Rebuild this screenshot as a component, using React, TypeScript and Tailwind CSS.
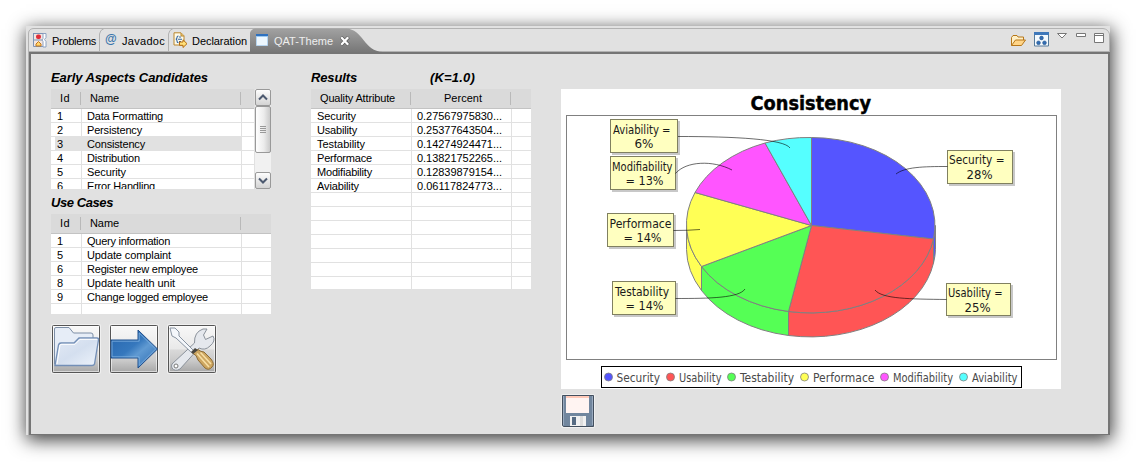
import React, { useLayoutEffect, useRef } from "react";

function Fit({ w, children, className = "" }: { w: number; children: string; className?: string }) {
  const ref = useRef<HTMLSpanElement>(null);
  useLayoutEffect(() => {
    const el = ref.current;
    if (!el) return;
    el.style.letterSpacing = "0px";
    const natural = el.getBoundingClientRect().width;
    el.style.letterSpacing = `${(w - natural) / children.length}px`;
  }, [w, children]);
  return (
    <span ref={ref} className={`inline-block whitespace-pre ${className}`}>
      {children}
    </span>
  );
}

type Cell = [string, number];

interface TableProps {
  cols: string[];
  head: { label: Cell; pad: string }[];
  rows: Cell[][];
  blank: number;
  height: string;
  selected?: number;
  scroll?: boolean;
}

function Table({ cols, head, rows, blank, height, selected, scroll }: TableProps) {
  const all: (Cell[] | null)[] = [...rows, ...Array(blank).fill(null)];
  return (
    <div className={`relative w-[220px] shrink-0 overflow-hidden bg-white ${height}`}>
      <div className="flex h-5 border-b border-[#c3c3c3] bg-[#dadada] text-[11px] leading-[19px]">
        {head.map((h, i) => (
          <div key={i} className={`flex shrink-0 justify-between ${cols[i]} ${h.pad}`}>
            <Fit w={h.label[1]}>{h.label[0]}</Fit>
            <i className="mt-[3px] h-[13px] w-px bg-[#b9b9b9]" />
          </div>
        ))}
      </div>
      {all.map((r, i) => (
        <div key={i} className="flex h-[14px] border-b border-[#e1e1e1] text-[11px] leading-[14px]">
          {cols.map((c, j) => (
            <div key={j} className={`flex shrink-0 ${c} ${j === 0 ? "pl-1" : "border-l border-[#e1e1e1]"}`}>
              <div className={`h-[14px] grow ${j === 0 ? "pl-[2px]" : "pl-[5px]"} ${i === selected ? "bg-[#e1e1e1]" : ""}`}>
                {r && <Fit w={r[j][1]}>{r[j][0]}</Fit>}
              </div>
            </div>
          ))}
          <div className="grow border-l border-[#e1e1e1]" />
        </div>
      ))}
      {scroll && <ScrollBar />}
    </div>
  );
}

function ScrollBar() {
  return (
    <svg className="absolute right-0 top-0" width="17" height="100" viewBox="0 0 17 100">
      <defs>
        <linearGradient id="sb" x1="0" x2="1" y1="0" y2="0">
          <stop offset="0" stopColor="#fff" />
          <stop offset=".55" stopColor="#ececec" />
          <stop offset="1" stopColor="#c8c8c8" />
        </linearGradient>
        <linearGradient id="sv" x1="0" x2="0" y1="0" y2="1">
          <stop offset="0" stopColor="#fff" />
          <stop offset="1" stopColor="#d2d2d2" />
        </linearGradient>
      </defs>
      <rect width="17" height="100" fill="#f1f1f1" />
      <rect width="1" height="100" fill="#e1e1e1" />
      <rect x="1.5" y=".5" width="15" height="16" rx="1.5" fill="url(#sv)" stroke="#999" />
      <rect x="1.5" y="17.5" width="15" height="46" rx="1.5" fill="url(#sb)" stroke="#999" />
      <rect x="1.5" y="83.5" width="15" height="16" rx="1.5" fill="url(#sv)" stroke="#999" />
      <path d="M5 10.5l4-4 4 4M5 89.5l4 4 4-4" fill="none" stroke="#4d5a70" strokeWidth="2" />
      <path d="M6 37.5h6M6 39.5h6M6 41.5h6M6 43.5h6" stroke="#999" />
    </svg>
  );
}

function ProblemsIcon() {
  return (
    <svg width="14" height="16" viewBox="0 0 14 16">
      <path d="M.5 1v13.5h12M1 1.5h12" stroke="#7d93b5" fill="none" />
      <path d="M1 2h9v12H1z" fill="#f4e6df" />
      <path d="M10 1.500h3v4l-1.500 2 1.500 2V15h-3V9.500L9 8l1-1.500z" fill="#fff" stroke="#8ea3c2" />
      <path d="M1 8h8" stroke="#7d93b5" />
      <rect x="3" y="2.500" width="5" height="4.500" rx="2" fill="#e02d39" />
      <path d="M5.500 9.500L8 12v2H3v-2z" fill="#ffd66d" stroke="#c4761a" />
    </svg>
  );
}

function DeclarationIcon() {
  return (
    <svg width="15" height="16" viewBox="0 0 15 16">
      <path d="M1 .8h7l3 3V13H1z" fill="#fffbe9" stroke="#b9862e" />
      <path d="M8 1v3h3" fill="#eccb7d" stroke="#b9862e" />
      <path d="M5.500 4Q4 4 4 5.500T2.800 7.300Q4 7.300 4 9t1.500 1.700M5 7.300h4M6 5h2M6 9.500h2" fill="none" stroke="#3265a3" strokeWidth="1.100" />
      <path d="M6.500 10h3.500V7.800L14 11.700 10 15.500V13.300H6.500z" fill="#ffe07a" stroke="#b56c10" />
    </svg>
  );
}

function Tabs() {
  return (
    <div className="relative flex h-[28px] shrink-0 border-l border-[#e1e1e1] bg-[#e1e1e1]">
      <svg className="absolute -left-px top-0" width="1084" height="28" viewBox="26 26 1084 28">
        <defs>
          <linearGradient id="act" x1="0" x2="0" y1="0" y2="1">
            <stop offset="0" stopColor="#a2a2a2" />
            <stop offset="1" stopColor="#777" />
          </linearGradient>
        </defs>
        <path d="M28.500 54V33Q29 28.500 34 28.500H1103Q1108 29 1109.500 34V54M28 51.500H1109" fill="none" stroke="#b2b2b2" />
        <path d="M99.500 51V34Q100 30 104 28.500M168.500 51V34Q169 30 173 28.500" fill="none" stroke="#b2b2b2" />
        <path d="M250 52V33Q251 29 255 28.500H346C363 29 364 51.500 383 52z" fill="url(#act)" />
        <path d="M29 52H1110V54H29z" fill="#757575" />
      </svg>
      <div className="relative flex grow items-center pl-[6px] text-[11px] leading-[24px]">
        <div className="flex w-[72px] items-center"><ProblemsIcon /><Fit w={44} className="ml-[5px] pt-[2px]">Problems</Fit></div>
        <div className="flex w-[68px] items-center">
          <b className="w-[17px] pb-[2px] text-[12px] leading-[20px] text-[#3a76ac]">@</b>
          <Fit w={43} className="pt-[2px]">Javadoc</Fit>
        </div>
        <div className="flex w-[82px] items-center"><DeclarationIcon /><Fit w={55} className="ml-[4px] pt-[2px]">Declaration</Fit></div>
        <div className="flex grow items-center text-[#eee]">
          <svg width="14" height="14" viewBox="0 0 14 14"><path d="M1.500 1.500h11v11h-11z" fill="#edf7fe" stroke="#b6d4ee" /><path d="M1 1h12v3H1z" fill="#2e71bf" /><path d="M1 3.500h12" stroke="#9dc8ee" /></svg>
          <Fit w={59} className="ml-[5px] pt-[2px]">QAT-Theme</Fit>
          <svg className="ml-[7px] mt-px" width="10" height="10" viewBox="0 0 10 10"><path d="M1 1l7.500 8M8.500 1L1 9" stroke="#555" strokeWidth="3.400" /><path d="M1.200 1.200l7 7.500M8.200 1.200l-7 7.500" stroke="#fff" strokeWidth="2.300" /></svg>
        </div>
        <svg width="100" height="28" viewBox="1010 26 100 28">
          <path d="M1011.500 45.500V37.500l1.500-2h4l1 1.500h5.500v3" fill="#fff0c7" stroke="#b77719" />
          <path d="M1011.500 45.500l4-5.500h10l-4 5.500z" fill="#ffd588" stroke="#b77719" />
          <path d="M1034.500 32.500h14v13.500h-14z" fill="#f3faff" stroke="#567b9b" />
          <path d="M1034 32h15v3h-15z" fill="#3e78ba" />
          <g fill="#316eb6" stroke="#244c7d" strokeWidth=".5"><circle cx="1041.500" cy="38" r="1.900" /><circle cx="1038.500" cy="42.800" r="1.900" /><circle cx="1044.500" cy="42.800" r="1.900" /></g>
          <path d="M1057.500 33.500h9l-4.500 4.500z" fill="#fff" stroke="#777" />
          <path d="M1076.500 33.500h9v3h-9z" fill="#fff" stroke="#777" />
          <path d="M1094.500 33.500h9v9h-9zM1094 35.500h10" fill="#fff" stroke="#777" />
        </svg>
      </div>
    </div>
  );
}

function Frame() {
  return (
    <>
      <rect x=".5" y=".5" width="49" height="49" rx="1" fill="none" stroke="#f0f0f0" />
      <rect x="1.500" y="1.500" width="47" height="47" rx="1" fill="url(#btn)" stroke="#555" />
      <rect x="2.500" y="2.500" width="45" height="45" fill="none" stroke="#fff" strokeOpacity=".55" />
    </>
  );
}

function Buttons() {
  return (
    <div className="mt-[10px] flex gap-2">
      <svg width="50" height="50" viewBox="0 0 50 50">
        <defs>
          <linearGradient id="btn" x1="0" x2="0" y1="0" y2="1"><stop offset="0" stopColor="#f8f8f8" /><stop offset=".5" stopColor="#e9e9e9" /><stop offset=".52" stopColor="#d9d9d9" /><stop offset=".75" stopColor="#c9c9c9" /><stop offset="1" stopColor="#a6a6a6" /></linearGradient>
          <linearGradient id="fold" x1="0" x2="1" y1="0" y2="1"><stop offset="0" stopColor="#e3eaf5" /><stop offset=".5" stopColor="#d4dfef" /><stop offset="1" stopColor="#edf3fb" /></linearGradient>
        </defs>
        <Frame />
        <path d="M3.500 40V5Q3.500 3.500 5 3.500H18L22.500 9H40Q42 9 42 11V40z" fill="#e6edf7" stroke="#7c8ea6" />
        <path d="M4 41.500L7.500 21Q8 19 10 19H23L28 14H46Q48 14 47.500 16L43.500 40Q43 41.500 41 41.500z" fill="url(#fold)" stroke="#738fb7" strokeWidth="1.300" />
        <path d="M6 40L9 21Q9.500 20.300 11 20.300H24L29 15.300H46" fill="none" stroke="#fff" />
      </svg>
      <svg width="50" height="50" viewBox="0 0 50 50">
        <defs><linearGradient id="arr" x1="0" x2="1" y1="0" y2="1"><stop offset="0" stopColor="#2564ad" /><stop offset=".45" stopColor="#3678bd" /><stop offset=".6" stopColor="#609ad2" /><stop offset="1" stopColor="#2868b0" /></linearGradient></defs>
        <Frame />
        <path d="M2 16H29V6L48.500 25 29 44V34H2z" fill="url(#arr)" stroke="#1f4e8c" />
        <path d="M3 17.200H30.200V9L46.700 25 30.200 41.500V32.800H3z" fill="none" stroke="#80b1df" strokeWidth=".8" />
      </svg>
      <svg width="50" height="50" viewBox="0 0 50 50">
        <Frame />
        <path d="M5 40L27.500 19Q27 8 36 5L40 5 36.500 11 38.500 15.500 46 12Q49 17 43 22 38 27 32 24L13 45Q8 48 5 44 4 42 5 40z" fill="#e5e8ed" stroke="#8b929b" />
        <circle cx="9" cy="42" r="2" fill="#fff" stroke="#777" />
        <path d="M3 4L8 4 12 8 12 12 27 27 25 29 9 14 5 12z" fill="#f4f7fb" stroke="#8994a2" />
        <path d="M25.500 29L31 25.500Q34 28 37 28L44 35Q48 40 45 43 42 47 38 44L31 36Q30 31 25.500 29z" fill="#cda661" stroke="#8d6c35" />
        <path d="M30 29.500L42 43M33.500 28.500L44 40" stroke="#f7dfa5" strokeWidth="1.600" />
        <path d="M24 28l4-4 3 2-5 4z" fill="#494640" />
      </svg>
    </div>
  );
}

interface Box {
  x: number; y: number; w: number; h: number;
  lines: [string, number, number, number][];
}

const labels: Box[] = [
  { x: 610.5, y: 119.5, w: 67, h: 33, lines: [["Aviability =", 613, 57.5, 134], ["6%", 634.5, 19, 148]] },
  { x: 610.5, y: 156.5, w: 65, h: 33, lines: [["Modifiability", 612, 60.5, 171], ["= 13%", 625.5, 38, 185]] },
  { x: 607.5, y: 213.5, w: 66, h: 33, lines: [["Performace", 609.5, 62, 228], ["= 14%", 623.5, 38, 242]] },
  { x: 612.5, y: 281.5, w: 63, h: 33, lines: [["Testability", 615, 54, 296], ["= 14%", 625.5, 38, 310]] },
  { x: 947.5, y: 150.5, w: 65, h: 33, lines: [["Security =", 949, 55.5, 164], ["28%", 966.5, 26, 179]] },
  { x: 946.5, y: 283.5, w: 64, h: 32, lines: [["Usability =", 948, 54.5, 297], ["25%", 964.5, 26, 312]] },
];

const legend: [string, string, number, number, number][] = [
  ["Security", "#5555ff", 608.5, 616.5, 43.5],
  ["Usability", "#ff5555", 670.5, 679, 42.5],
  ["Testability", "#55ff55", 731.5, 740, 54],
  ["Performace", "#ffff55", 804.5, 813, 61.5],
  ["Modifiability", "#ff55ff", 884.5, 893, 60],
  ["Aviability", "#55ffff", 963.5, 972, 45.5],
];

const chartFont = "[font-family:'DejaVu_Sans_Condensed','DejaVu_Sans',sans-serif]";

function Chart() {
  return (
    <svg className={`bg-white ${chartFont}`} width="500" height="300" viewBox="561 89 500 300">
      <text x="750.500" y="110" className="font-bold" fontSize="19.5" stroke="#000" strokeWidth=".4" textLength="120.500" lengthAdjust="spacingAndGlyphs">Consistency</text>
      <rect x="566.500" y="115.500" width="490" height="244" fill="none" stroke="#808080" />
      <g stroke="#808080" strokeWidth="1" strokeLinejoin="round">
        <path d="M933.500 239A124.500 88 0 0 0 935.500 225.500V249.500A124.500 88 0 0 1 933.500 263z" fill="#5555ff" />
        <path d="M933.500 239A124.500 88 0 0 1 788.500 311.500V335.500A124.500 88 0 0 0 933.500 263z" fill="#ff5555" />
        <path d="M788.500 311.500A124.500 88 0 0 1 701.500 266.500V290.500A124.500 88 0 0 0 788.500 335.500z" fill="#55ff55" />
        <path d="M701.500 266.500A124.500 88 0 0 1 686.500 225.500V249.500A124.500 88 0 0 0 701.500 290.500z" fill="#ffff55" />
        <path d="M811.500 225.500V137.500A124.500 88 0 0 1 933.500 239z" fill="#5555ff" />
        <path d="M811.500 225.500L933.500 239A124.500 88 0 0 1 788.500 311.500z" fill="#ff5555" />
        <path d="M811.500 225.500L788.500 311.500A124.500 88 0 0 1 701.500 266.500z" fill="#55ff55" />
        <path d="M811.500 225.500L701.500 266.500A124.500 88 0 0 1 695 192.500z" fill="#ffff55" />
        <path d="M811.500 225.500L695 192.500A124.500 88 0 0 1 765 143z" fill="#ff55ff" />
        <path d="M811.500 225.500L765 143A124.500 88 0 0 1 811.500 137.500z" fill="#55ffff" />
      </g>
      {labels.map((b) => (
        <g key={b.lines[0][0]}>
          <rect x={b.x + 1.5} y={b.y + 1.5} width={b.w + 1} height={b.h + 1} fill="#c8c8c8" />
          <rect x={b.x} y={b.y} width={b.w} height={b.h} fill="#ffffc0" stroke="#808060" />
          {b.lines.map(([t, x, w, y]) => (
            <text key={t} x={x} y={y} textLength={w} lengthAdjust="spacingAndGlyphs" fontSize="12" fill="#1a1a1a">{t}</text>
          ))}
        </g>
      ))}
      <path d="M678 136.500C735 136.500 784 139 790 148M675.500 173.500C686 161 713 160 732 170M673.500 230.500Q688 230.500 700 229.500M675.500 298.500C710 298.500 739 298 745 289M947.500 166.500C923 166.500 905 167 896 174M946.500 299.500C910 299 882 299 875 290" fill="none" stroke="#000" strokeOpacity=".58" />
      <rect x="601.500" y="366.500" width="420" height="21" fill="none" stroke="#000" />
      {legend.map(([t, color, cx, x, w]) => (
        <g key={t}>
          <circle cx={cx} cy="377" r="4" fill={color} stroke="#808080" strokeWidth=".8" />
          <text x={x} y="382" textLength={w} lengthAdjust="spacingAndGlyphs" fontSize="12" fill="#4a4a4a">{t}</text>
        </g>
      ))}
    </svg>
  );
}

function SaveIcon() {
  return (
    <svg className="mt-[5px]" width="34" height="34" viewBox="0 0 34 34">
      <rect x=".5" y=".5" width="33" height="33" rx="1" fill="none" stroke="#f0f0f0" />
      <path d="M1.500 1.500h31v31h-30l-1-1z" fill="#71869e" stroke="#434f5e" />
      <path d="M2.500 2v29M31.500 2v29" stroke="#9aabc0" />
      <path d="M5 2h23v17H5z" fill="#fff4f2" /><path d="M5 2h23v2H5z" fill="#ffc9b8" />
      <path d="M9 22h16v10H9z" fill="#f1f1f1" /><path d="M19 22h3v10h-3z" fill="#ddd" />
      <path d="M11 23h4v8h-4z" fill="#576b83" />
    </svg>
  );
}

const title = "text-[13px] font-bold italic leading-[22px]";

export default function App() {
  return (
    <div className="h-[462px] w-[1136px] overflow-hidden bg-white pl-[26px] pt-[26px] text-black [font-family:'Liberation_Sans',Arial,sans-serif]">
      <div className="flex h-[409px] w-[1084px] flex-col bg-[#e1e1e1] shadow-[1px_4px_17px_1px_rgba(0,0,0,0.76)]">
        <Tabs />
        <div className="flex grow border-l-2 border-[#e1e1e1]">
          <div className="flex grow border-l border-[#b2b2b2]">
            <div className="flex grow border-b border-l-2 border-r-2 border-[#757575] pl-5 pt-[13px]">
              <section className="flex w-[260px] shrink-0 flex-col">
                <h2 className={`h-[22px] ${title}`}><Fit w={157}>Early Aspects Candidates</Fit></h2>
                <Table
                  cols={["w-[30px]", "w-[160px]"]}
                  head={[{ label: ["Id", 10], pad: "pl-[9px]" }, { label: ["Name", 29], pad: "pl-[9px]" }]}
                  rows={[
                    [["1", 6], ["Data Formatting", 76]],
                    [["2", 6], ["Persistency", 55]],
                    [["3", 6], ["Consistency", 58]],
                    [["4", 6], ["Distribution", 53]],
                    [["5", 6], ["Security", 39]],
                    [["6", 6], ["Error Handling", 68]],
                  ]}
                  blank={0}
                  height="h-[100px]"
                  selected={2}
                  scroll
                />
                <h2 className={`h-[25px] pt-[3px] ${title}`}><Fit w={62}>Use Cases</Fit></h2>
                <Table
                  cols={["w-[30px]", "w-[160px]"]}
                  head={[{ label: ["Id", 10], pad: "pl-[9px]" }, { label: ["Name", 29], pad: "pl-[9px]" }]}
                  rows={[
                    [["1", 6], ["Query information", 83]],
                    [["5", 6], ["Update complaint", 84]],
                    [["6", 6], ["Register new employee", 111]],
                    [["8", 6], ["Update health unit", 88]],
                    [["9", 6], ["Change logged employee", 121]],
                  ]}
                  blank={1}
                  height="h-[100px]"
                />
                <Buttons />
              </section>
              <section className="w-[250px] shrink-0">
                <h2 className={`flex h-[22px] ${title}`}>
                  <span className="w-[119px]"><Fit w={46}>Results</Fit></span>
                  <Fit w={45}>(K=1.0)</Fit>
                </h2>
                <Table
                  cols={["w-[100px]", "w-[100px]"]}
                  head={[{ label: ["Quality Attribute", 75], pad: "pl-[9px]" }, { label: ["Percent", 38], pad: "pl-[33px]" }]}
                  rows={[
                    [["Security", 39], ["0.27567975830...", 85]],
                    [["Usability", 40], ["0.25377643504...", 85]],
                    [["Testability", 48], ["0.14274924471...", 85]],
                    [["Performace", 55], ["0.13821752265...", 85]],
                    [["Modifiability", 55], ["0.12839879154...", 85]],
                    [["Aviability", 42], ["0.06117824773...", 85]],
                  ]}
                  blank={7}
                  height="h-[200px]"
                />
              </section>
              <section className="flex flex-col pt-[22px]">
                <Chart />
                <SaveIcon />
              </section>
            </div>
          </div>
        </div>
      </div>
    </div>
  );
}
